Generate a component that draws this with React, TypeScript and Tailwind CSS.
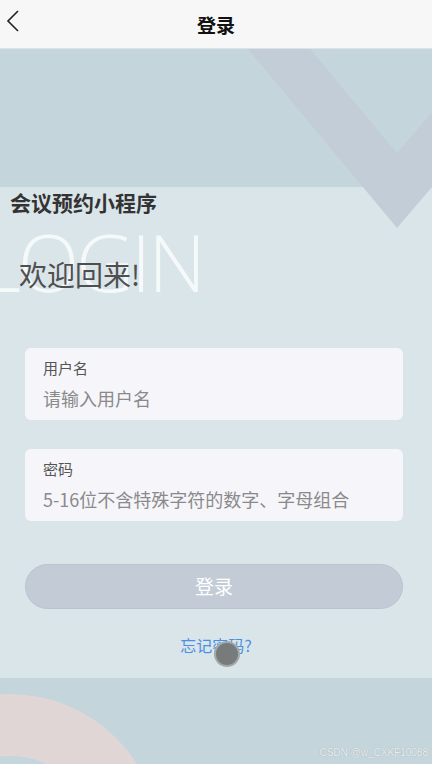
import React from "react";

const font = { fontFamily: '"Noto Sans CJK SC", "Noto Sans", sans-serif' };

export default function App() {
  return (
    <div className="w-[432px] h-[764px] overflow-hidden flex flex-col bg-[#dae5ea]" style={font}>
      {/* header */}
      <div className="relative h-[49px] shrink-0 bg-[#f7f7f7] border-b border-[#dde3e6] flex items-center justify-center">
        <svg className="absolute left-[5px] top-[8px]" width="16" height="26" viewBox="0 0 16 26">
          <path d="M13 3 L3 13 L13 23" fill="none" stroke="#222" strokeWidth="1.6" />
        </svg>
        <span className="text-[19px] font-bold text-[#111] leading-none">登录</span>
      </div>

      <div className="relative flex-1 flex flex-col overflow-hidden">
        {/* top band */}
        <div className="h-[138px] shrink-0 bg-[#c4d5dc]" />

        {/* middle content */}
        <div className="relative h-[491px] shrink-0 bg-[#dae5ea] flex flex-col">
          <div className="pl-[10px] pt-[1px] text-[21px] font-bold text-[#333] leading-[28px] z-10">会议预约小程序</div>
          <div
            className="absolute left-[-20px] top-[34px] text-[80px] leading-none text-white/75 font-light tracking-[-3px]"
            style={{ fontFamily: '"Open Sans", "Noto Sans", sans-serif' }}
          >
            LOGIN
          </div>
          <div className="relative pl-[19px] mt-[40px] text-[28px] text-[#4f4f4f] leading-[36px]">欢迎回来!</div>

          <div className="mt-[56px] ml-[25px] mr-[29px] flex flex-col gap-[29px]">
            <div className="h-[72px] rounded-[6px] bg-[#f6f5fa] px-[18px] pt-[9px] flex flex-col">
              <span className="text-[15px] text-[#555] leading-[22px]">用户名</span>
              <span className="mt-[6px] text-[18px] text-[#8a8a8a] leading-[26px]">请输入用户名</span>
            </div>
            <div className="h-[72px] rounded-[6px] bg-[#f6f5fa] px-[18px] pt-[9px] flex flex-col">
              <span className="text-[15px] text-[#555] leading-[22px]">密码</span>
              <span className="mt-[6px] text-[18px] text-[#8a8a8a] leading-[26px]">5-16位不含特殊字符的数字、字母组合</span>
            </div>
          </div>

          <div className="mt-[43px] ml-[25px] mr-[29px] h-[45px] rounded-full bg-[#c3ccd6] border border-[#b9c4ce] flex items-center justify-center text-[19px] text-white">
            登录
          </div>

          <div className="relative mt-[25px] flex justify-center">
            <span className="text-[16px] text-[#4a90e2] leading-[22px]">忘记密码?</span>
            <div className="absolute left-[214px] top-[7px] w-[26px] h-[26px] rounded-full bg-[#777b7c] border-2 border-[#a3a8aa]" />
          </div>
        </div>

        {/* bottom band */}
        <div className="flex-1 bg-[#c4d5dc]" />

        {/* decorative V */}
        <svg className="absolute left-0 top-0" width="432" height="200" viewBox="0 0 432 200">
          <polygon points="248,0 310,0 397,104 432,63 432,138 397,179" fill="#c3cdd7" />
        </svg>

        {/* decorative ring */}
        <div className="absolute left-[-140px] top-[645px] w-[300px] h-[300px] rounded-full border-[62px] border-[#e0d6d6]" />

        <div
          className="absolute right-[4px] bottom-[6px] text-[10px] text-white/80 leading-none"
          style={{ fontFamily: '"Liberation Sans", sans-serif', textShadow: "0 0 1px #8a9aa0" }}
        >
          CSDN @w_CXKF10088
        </div>
      </div>
    </div>
  );
}
